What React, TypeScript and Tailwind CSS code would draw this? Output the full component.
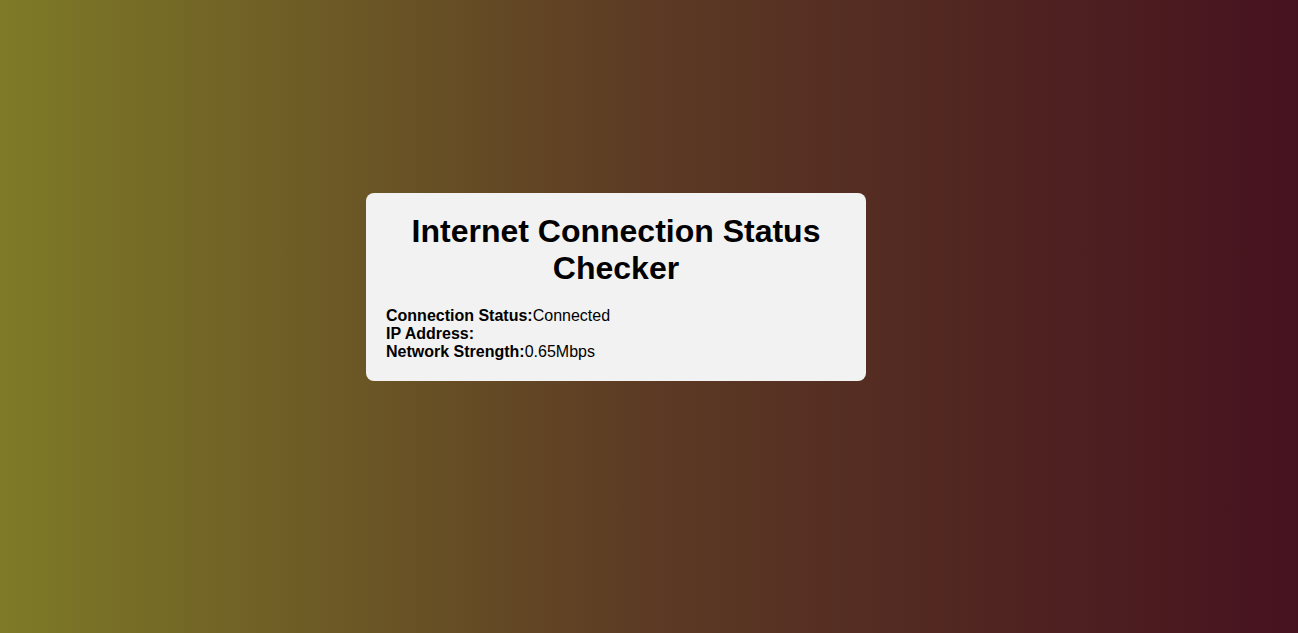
export default function App() {
  return (
    <div
      className="w-full h-screen flex items-center justify-center pr-[66px] pb-[59px] bg-[linear-gradient(to_right,#7e7a27,#5c3a24,#46121f)]"
      style={{ fontFamily: '"Liberation Sans", Arial, sans-serif' }}
    >
      <div className="w-[500px] bg-[#f2f2f2] rounded-lg p-5 text-black">
        <h1 className="text-[32px] leading-[37px] font-bold text-center mb-5">
          Internet Connection Status Checker
        </h1>
        <div className="text-base leading-[18px]">
          <div>
            <span className="font-bold">Connection Status:</span>
            <span>Connected</span>
          </div>
          <div>
            <span className="font-bold">IP Address:</span>
            <span></span>
          </div>
          <div>
            <span className="font-bold">Network Strength:</span>
            <span>0.65Mbps</span>
          </div>
        </div>
      </div>
    </div>
  );
}
